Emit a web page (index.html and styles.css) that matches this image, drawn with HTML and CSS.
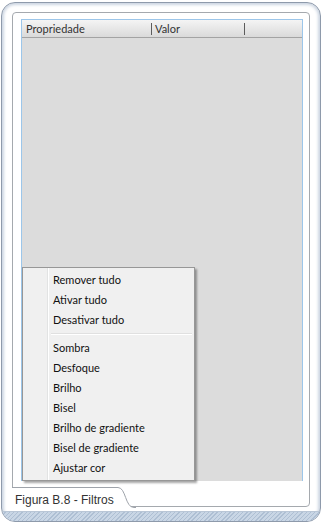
FILE: index.html
```html
<!DOCTYPE html>
<html lang="pt">
<head>
    <meta charset="UTF-8">
    <title>Figura B.8 - Filtros</title>
    <link rel="stylesheet" href="styles.css">
</head>
<body>
    <div class="frame">
        <div class="panel">
            <div class="grid">
                <div class="grid-head">
                    <span class="col col-prop">Propriedade</span>
                    <span class="col col-val">Valor</span>
                </div>
                <div class="grid-body"></div>

                <ul class="menu">
                    <li>Remover tudo</li>
                    <li>Ativar tudo</li>
                    <li>Desativar tudo</li>
                    <li class="sep"></li>
                    <li>Sombra</li>
                    <li>Desfoque</li>
                    <li>Brilho</li>
                    <li>Bisel</li>
                    <li>Brilho de gradiente</li>
                    <li>Bisel de gradiente</li>
                    <li>Ajustar cor</li>
                </ul>
            </div>
        </div>

        <div class="caption">
            <span class="caption-text">Figura B.8 - Filtros</span>
            <svg class="caption-curve" width="18" height="24" viewBox="0 0 18 24">
                <path d="M0 0.5 C8 0.5 7 20.5 16 20.5 L18 20.5 L18 24 L0 24 Z" fill="#fff"/>
                <path d="M0 0.5 C8 0.5 7 20.5 16 20.5 L18 20.5" fill="none" stroke="#9ea3aa" stroke-width="1"/>
            </svg>
        </div>

        <div class="band"></div>
    </div>
</body>
</html>
```

FILE: styles.css
```css
body {
    margin: 0;
    background: #fff;
    font-family: Lato, 'Open Sans', sans-serif;
}

.frame {
    position: relative;
    box-sizing: border-box;
    width: 320px;
    height: 520px;
    margin: 2px 1px 1px 1px;
    padding: 9px 10px 0 10px;
    border: 1px solid #8e9aab;
    border-radius: 14px;
    background: #fff;
    box-shadow: inset 0 0 3px 2px #cdd6e2;
    overflow: hidden;
    display: flex;
    flex-direction: column;
    gap: 4px;
}

.panel {
    box-sizing: border-box;
    width: 298px;
    height: 496px;
    padding: 6px 6px 0 8px;
    border: 1px solid #a5a9ae;
    border-radius: 4px;
    background: #fff;
}

.grid {
    position: relative;
    box-sizing: border-box;
    width: 282px;
    height: 462px;
    border: 1px solid #9cc6ea;
    border-bottom: none;
    background: #dcdcdc;
    display: flex;
    flex-direction: column;
}

.grid-head {
    height: 17px;
    display: flex;
    align-items: center;
    background: linear-gradient(#f4f4f4, #dadada);
    border-bottom: 1px solid #a3a3a3;
    font-size: 11px;
    color: #333;
}

.col {
    box-sizing: border-box;
    line-height: 12px;
    border-right: 1px solid #5c5c5c;
}

.col-prop {
    width: 130px;
    padding-left: 4px;
}

.col-val {
    width: 93px;
    padding-left: 3px;
}

.grid-body {
    flex: 1;
}

/* context menu */
.menu {
    position: absolute;
    left: 0;
    bottom: 0;
    box-sizing: border-box;
    width: 173px;
    margin: 0;
    padding: 2px;
    list-style: none;
    border: 1px solid #979797;
    background: linear-gradient(to right, transparent 24px, #e2e3e3 24px, #e2e3e3 25px, #fff 25px, #fff 26px, transparent 26px), #f0f0f0;
    box-shadow: 2px 2px 2px rgba(0, 0, 0, 0.35);
    font-size: 11px;
    color: #111;
}

.menu li {
    height: 20px;
    line-height: 20px;
    padding-left: 28px;
}

.menu li.sep {
    height: 8px;
    padding: 0;
    margin-left: 26px;
    background: linear-gradient(transparent 3px, #e0e0e0 3px, #e0e0e0 4px, #fff 4px, #fff 5px, transparent 5px);
}

/* figure caption tab */
.caption {
    position: absolute;
    left: 10px;
    top: 484px;
    height: 24px;
    display: flex;
    align-items: flex-start;
}

.caption-text {
    box-sizing: border-box;
    width: 106px;
    height: 24px;
    padding: 5px 0 0 3px;
    border-top: 1px solid #9ea3aa;
    background: #fff;
    font-family: 'Liberation Sans', Arial, sans-serif;
    font-size: 12px;
    line-height: 14px;
    color: #333;
    white-space: nowrap;
}

.caption-curve {
    display: block;
}

.band {
    height: 9px;
    margin: 0 -10px;
    border-top: 1px solid #b9c6d6;
    background: repeating-linear-gradient(135deg, #c9d6e5 0 2px, #aebfd3 2px 3px);
}
```
